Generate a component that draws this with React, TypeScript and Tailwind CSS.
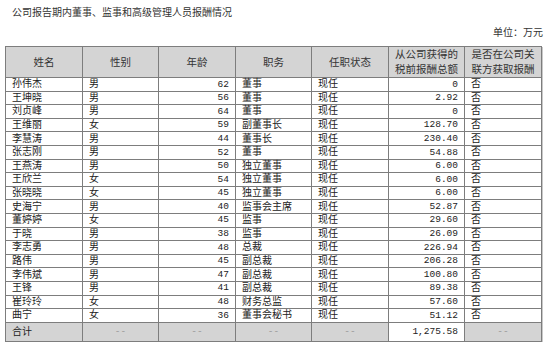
import type { ReactNode } from "react";

type Row = {
  name: string;
  sex: string;
  age: number;
  role: string;
  status: string;
  pay: string;
  related: string;
};

const rows: Row[] = [
  { name: "孙伟杰", sex: "男", age: 62, role: "董事", status: "现任", pay: "0", related: "否" },
  { name: "王坤晓", sex: "男", age: 56, role: "董事", status: "现任", pay: "2.92", related: "否" },
  { name: "刘贞峰", sex: "男", age: 64, role: "董事", status: "现任", pay: "0", related: "否" },
  { name: "王维丽", sex: "女", age: 59, role: "副董事长", status: "现任", pay: "128.70", related: "否" },
  { name: "李慧涛", sex: "男", age: 44, role: "董事长", status: "现任", pay: "230.40", related: "否" },
  { name: "张志刚", sex: "男", age: 52, role: "董事", status: "现任", pay: "54.88", related: "否" },
  { name: "王燕涛", sex: "男", age: 50, role: "独立董事", status: "现任", pay: "6.00", related: "否" },
  { name: "王欣兰", sex: "女", age: 54, role: "独立董事", status: "现任", pay: "6.00", related: "否" },
  { name: "张晓晓", sex: "女", age: 45, role: "独立董事", status: "现任", pay: "6.00", related: "否" },
  { name: "史海宁", sex: "男", age: 40, role: "监事会主席", status: "现任", pay: "52.87", related: "否" },
  { name: "董婷婷", sex: "女", age: 45, role: "监事", status: "现任", pay: "29.60", related: "否" },
  { name: "于晓", sex: "男", age: 38, role: "监事", status: "现任", pay: "26.09", related: "否" },
  { name: "李志勇", sex: "男", age: 48, role: "总裁", status: "现任", pay: "226.94", related: "否" },
  { name: "路伟", sex: "男", age: 45, role: "副总裁", status: "现任", pay: "206.28", related: "否" },
  { name: "李伟斌", sex: "男", age: 47, role: "副总裁", status: "现任", pay: "100.80", related: "否" },
  { name: "王锋", sex: "男", age: 41, role: "副总裁", status: "现任", pay: "89.38", related: "否" },
  { name: "崔玲玲", sex: "女", age: 48, role: "财务总监", status: "现任", pay: "57.60", related: "否" },
  { name: "曲宁", sex: "女", age: 36, role: "董事会秘书", status: "现任", pay: "51.12", related: "否" },
];

const cell = "border border-[#7d7d7d] px-[6px] h-[13.6px] py-0 leading-none whitespace-nowrap";
const num = "font-['Liberation_Mono',monospace] text-[9.5px] text-right";
const dash =
  "border border-[#7d7d7d] bg-[#d4d4d4] text-center text-[#999] font-['Liberation_Mono',monospace] text-[9.5px] py-0";

const Th = ({ children }: { children: ReactNode }) => (
  <th className="border border-[#7d7d7d] bg-[#d4d4d4] font-normal text-center h-[30px] px-0 py-0 leading-[15px] text-[10.5px] whitespace-nowrap text-[#333]">
    {children}
  </th>
);

export default function App() {
  return (
    <div className="w-[550px] h-[342px] bg-white overflow-hidden text-[#222] font-['Liberation_Serif','Noto_Sans_CJK_SC',serif] text-[10px]">
      <div className="pl-[12px] pt-[7px] leading-[12px] text-[#333]">公司报告期内董事、监事和高级管理人员报酬情况</div>
      <div className="flex justify-end pr-[7px] pt-[8px] leading-[12px] text-[#333]">单位：万元</div>
      <div className="pl-[5px] pt-[7px]">
        <table className="table-fixed border-collapse w-[536px] shadow-[1px_1px_0_#c8c8c8]">
          <colgroup>
            <col className="w-[77px]" />
            <col className="w-[76px]" />
            <col className="w-[77px]" />
            <col className="w-[76px]" />
            <col className="w-[77px]" />
            <col className="w-[76px]" />
            <col className="w-[77px]" />
          </colgroup>
          <thead>
            <tr>
              <Th>姓名</Th>
              <Th>性别</Th>
              <Th>年龄</Th>
              <Th>职务</Th>
              <Th>任职状态</Th>
              <Th>
                从公司获得的
                <br />
                税前报酬总额
              </Th>
              <Th>
                是否在公司关
                <br />
                联方获取报酬
              </Th>
            </tr>
          </thead>
          <tbody>
            {rows.map((r) => (
              <tr key={r.name}>
                <td className={cell}>{r.name}</td>
                <td className={cell}>{r.sex}</td>
                <td className={`${cell} ${num}`}>{r.age}</td>
                <td className={cell}>{r.role}</td>
                <td className={cell}>{r.status}</td>
                <td className={`${cell} ${num}`}>{r.pay}</td>
                <td className={cell}>{r.related}</td>
              </tr>
            ))}
            <tr>
              <td className="border border-[#7d7d7d] bg-[#d4d4d4] h-[19px] px-[6px] py-0 leading-none">合计</td>
              <td className={dash}>--</td>
              <td className={dash}>--</td>
              <td className={dash}>--</td>
              <td className={dash}>--</td>
              <td className="border border-[#7d7d7d] px-[6px] text-right font-['Liberation_Mono',monospace] text-[9.5px] py-0">1,275.58</td>
              <td className={dash}>--</td>
            </tr>
          </tbody>
        </table>
      </div>
    </div>
  );
}
